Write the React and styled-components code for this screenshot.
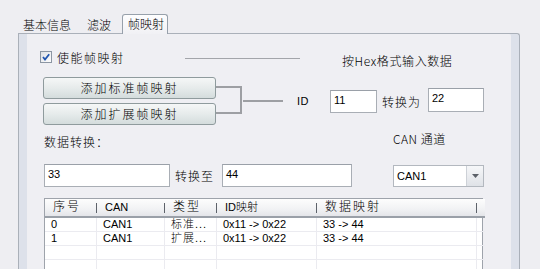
import React from "react";
import styled, { createGlobalStyle } from "styled-components";

const GlobalStyle = createGlobalStyle`
  html, body {
    margin: 0;
    padding: 0;
    width: 540px;
    height: 269px;
    overflow: hidden;
    background: #eeeef2;
    font-family: "Liberation Sans", "Noto Sans CJK SC", sans-serif;
    font-size: 12px;
    color: #000;
  }
`;

const Page = styled.div`
  width: 540px;
  height: 269px;
  overflow: hidden;
`;

const TabBar = styled.div`
  display: flex;
  align-items: flex-end;
  height: 33px;
  margin-left: 18px;
  position: relative;
  z-index: 1;
`;

const Tab = styled.div`
  box-sizing: border-box;
  width: ${p => p.w}px;
  height: ${p => (p.active ? 20 : 17)}px;
  line-height: 17px;
  padding-left: 5px;
  white-space: nowrap;
  font-family: "Noto Sans CJK SC", sans-serif;
  font-weight: 300;
  font-size: 12px;
  margin-bottom: ${p => (p.active ? -1 : 0)}px;
  ${p =>
    p.active &&
    `
    border: 1px solid #97a0ab;
    border-bottom: none;
    border-radius: 3px 3px 0 0;
    background: linear-gradient(#fdfdfe, #f1f1f5);
  `}
`;

const Panel = styled.div`
  box-sizing: border-box;
  width: 502px;
  height: 240px;
  border: 1px solid #aab0b9;
  border-bottom: none;
  border-radius: 0 3px 0 0;
  background: #efeff3;
  box-shadow: inset 8px 0 0 #dde1ea, inset -8px 0 0 #dde1ea;
  margin-left: 18px;
  padding: 13px 0 0 25px;
`;

const Row = styled.div`
  display: flex;
  align-items: center;
  height: ${p => p.h}px;
  margin-top: ${p => p.mt || 0}px;
`;

const Label = styled.span`
  display: inline-block;
  box-sizing: border-box;
  white-space: nowrap;
  font-family: ${p => (p.latin ? '"Liberation Sans", sans-serif' : '"Noto Sans CJK SC", sans-serif')};
  font-weight: ${p => (p.latin ? 400 : 300)};
  font-size: ${p => (p.latin ? 11 : 12)}px;
  letter-spacing: ${p => (p.ls != null ? p.ls : 1)}px;
  width: ${p => (p.w ? `${p.w}px` : "auto")};
  padding-left: ${p => p.pl || 0}px;
  margin-left: ${p => p.ml || 0}px;
  margin-top: ${p => p.mt || 0}px;
  margin-bottom: ${p => p.mb || 0}px;
`;

const CheckWrap = styled.label`
  display: flex;
  align-items: center;
  gap: 5px;
  width: 145px;
  margin-left: -4px;
`;

const Rule = styled.div`
  width: 115px;
  height: 1px;
  background: #a3a5aa;
  margin-top: 2px;
`;

const ButtonStack = styled.div`
  display: flex;
  flex-direction: column;
  gap: 4px;
  margin-left: -1px;
`;

const Button = styled.button`
  box-sizing: border-box;
  width: 173px;
  height: 22px;
  border: 1px solid #8f9b9d;
  border-radius: 3px;
  background: linear-gradient(#f5f7f7 0%, #e6ebeb 50%, #d4dcdc 100%);
  font-family: "Noto Sans CJK SC", sans-serif;
  font-weight: 300;
  font-size: 12px;
  letter-spacing: 2px;
  color: #000;
  padding: 0;
  line-height: 20px;
`;

const Input = styled.div`
  box-sizing: border-box;
  width: ${p => p.w}px;
  height: ${p => p.h || 23}px;
  border: 1px solid #a9aeb5;
  border-top-color: #9aa0a8;
  background: #fff;
  font-size: 11px;
  padding: 3px 0 0 3px;
  margin-left: ${p => p.ml || 0}px;
  margin-top: ${p => p.mt || 0}px;
`;

const Select = styled.div`
  box-sizing: border-box;
  display: flex;
  width: 91px;
  height: 22px;
  border: 1px solid #b3b8bf;
  background: #fff;
  margin-left: 41px;
`;

const SelectValue = styled.div`
  flex: 1;
  font-size: 11px;
  line-height: 20px;
  padding-left: 3px;
`;

const SelectArrow = styled.div`
  width: 16px;
  display: flex;
  align-items: center;
  justify-content: center;
  border-left: 1px solid #cdd1d7;
  background: linear-gradient(#f6f7f9, #dfe2e7);
`;

const Table = styled.div`
  box-sizing: border-box;
  width: 439px;
  height: 90px;
  border: 1px solid #9ea3ab;
  background: #fff;
  margin-top: 11px;
`;

const Grid = styled.div`
  display: grid;
  grid-template-columns: 52px 68px 52px 100px 160px 1fr;
`;

const HeadCell = styled.div`
  position: relative;
  height: 17px;
  line-height: 17px;
  padding-left: 8px;
  white-space: nowrap;
  font-family: "Liberation Sans", "Noto Sans CJK SC", sans-serif;
  font-weight: 300;
  font-size: ${p => (p.latin ? 11 : 12)}px;
  letter-spacing: ${p => (p.latin ? 0 : 2)}px;
  background: linear-gradient(#fdfdfd, #f1f2f4 60%, #e4e5e9);
  border-bottom: 2px solid #9aa0a8;

  &::after {
    content: ${p => (p.sep ? '""' : "none")};
    position: absolute;
    right: 0;
    top: 4px;
    width: 1px;
    height: 10px;
    background: #5d626a;
  }
`;

const Cell = styled.div`
  box-sizing: border-box;
  height: 14px;
  line-height: 13px;
  padding-left: 6px;
  white-space: nowrap;
  overflow: hidden;
  font-family: "Liberation Sans", "Noto Sans CJK SC", sans-serif;
  font-weight: 300;
  font-size: 11px;
  letter-spacing: ${p => (p.cjk ? 1 : 0)}px;
  border-bottom: 1px solid #ebebf0;
  border-right: ${p => (p.last ? "none" : "1px solid #ebebf0")};
`;

const CheckBox = () => (
  <svg width="12" height="12" viewBox="0 0 12 12">
    <defs>
      <linearGradient id="cbg" x1="0" y1="0" x2="1" y2="1">
        <stop offset="0" stopColor="#dcdfe4" />
        <stop offset="1" stopColor="#ffffff" />
      </linearGradient>
    </defs>
    <rect x="0.5" y="0.5" width="11" height="11" fill="url(#cbg)" stroke="#8c96a3" />
    <path d="M3 6 L5 8.5 L9.2 3.2" fill="none" stroke="#2256b0" strokeWidth="1.8" />
  </svg>
);

const Connector = () => (
  <svg width="67" height="48" viewBox="0 0 67 48">
    <g stroke="#9d9fa3" strokeWidth="2" fill="none">
      <path d="M0 10 H25 V36 H0" />
      <path d="M27 24 H67" />
    </g>
  </svg>
);

const rows = [
  ["0", "CAN1", "标准...", "0x11 -> 0x22", "33 -> 44"],
  ["1", "CAN1", "扩展...", "0x11 -> 0x22", "33 -> 44"],
  ["", "", "", "", ""],
  ["", "", "", "", ""],
];

const headers = [
  { t: "序号" },
  { t: "CAN", latin: true },
  { t: "类型" },
  { t: "ID映射", latin: true },
  { t: "数据映射" },
];

export default function App() {
  return (
    <Page>
      <GlobalStyle />
      <TabBar>
        <Tab w={64}>基本信息</Tab>
        <Tab w={40}>滤波</Tab>
        <Tab w={46} active>帧映射</Tab>
      </TabBar>
      <Panel>
        <Row h={20}>
          <CheckWrap>
            <CheckBox />
            <Label ls={1.5}>使能帧映射</Label>
          </CheckWrap>
          <Rule />
          <Label ml={42} mt={6} ls={0.6}>按Hex格式输入数据</Label>
        </Row>

        <Row h={48} mt={10}>
          <ButtonStack>
            <Button>添加标准帧映射</Button>
            <Button>添加扩展帧映射</Button>
          </ButtonStack>
          <Connector />
          <Label latin ml={14} w={33} ls={0.5}>ID</Label>
          <Input w={47} mt={1}>11</Input>
          <Label pl={5} w={51}>转换为</Label>
          <Input w={56} h={24} mt={-2}>22</Input>
        </Row>

        <Row h={20} mt={6}>
          <Label w={349}>数据转换：</Label>
          <Label mb={5} ls={0.5}>CAN 通道</Label>
        </Row>

        <Row h={23} mt={13}>
          <Input w={126}>33</Input>
          <Label pl={5} w={52}>转换至</Label>
          <Input w={130}>44</Input>
          <Select>
            <SelectValue>CAN1</SelectValue>
            <SelectArrow>
              <svg width="7" height="4" viewBox="0 0 7 4">
                <path d="M0 0 H7 L3.5 4 Z" fill="#5b6068" />
              </svg>
            </SelectArrow>
          </Select>
        </Row>

        <Table>
          <Grid>
            {headers.map((h, i) => (
              <HeadCell key={i} latin={h.latin} sep>
                {h.t}
              </HeadCell>
            ))}
            <HeadCell />
            {rows.map((r, ri) =>
              [...r, ""].map((c, ci) => (
                <Cell key={`${ri}-${ci}`} cjk={ci === 2} last={ci === 5}>
                  {c}
                </Cell>
              ))
            )}
          </Grid>
        </Table>
      </Panel>
    </Page>
  );
}
